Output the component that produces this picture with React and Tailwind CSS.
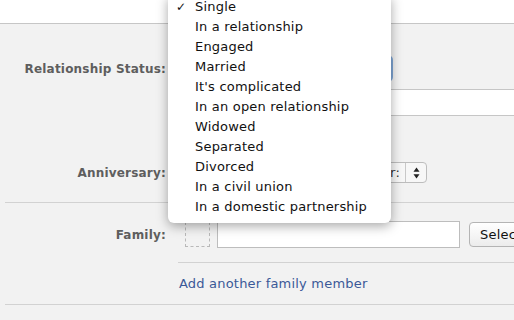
export default function App() {
  const items = [
    "Single",
    "In a relationship",
    "Engaged",
    "Married",
    "It's complicated",
    "In an open relationship",
    "Widowed",
    "Separated",
    "Divorced",
    "In a civil union",
    "In a domestic partnership",
  ];
  const label = "w-[166px] shrink-0 text-right font-bold text-[12px] tracking-[0.2px] text-[#5e5e5e]";
  return (
    <div className="relative w-[514px] h-[320px] overflow-hidden bg-[#f2f2f2] font-['DejaVu_Sans',sans-serif] text-[13px] tracking-[0.2px]">
      <div className="h-[24px] bg-white border-b border-[#c6c6c6]" />

      <div className="mt-[31px] flex items-center h-[27px]">
        <div className={label}>Relationship Status:</div>
        <div className="ml-[12px] shrink-0 w-[215px] h-[27px] rounded-[5px] border-2 border-[#7fa6d6] bg-white" />
      </div>

      <div className="mt-[7px] ml-[178px] w-[360px] h-[27px] bg-white border-y border-[#c6c6c6]" />

      <div className="mt-[46px] flex items-center h-[21px]">
        <div className={label}>Anniversary:</div>
        <div className="ml-[174px] shrink-0 flex items-center h-[21px] w-[87px] rounded-[4px] border border-[#bdbdbd] bg-[#f7f7f7]">
          <span className="flex-1 text-right pr-[5px] text-[#333]">Year:</span>
          <span className="flex items-center justify-center w-[21px] h-full border-l border-[#c8c8c8]">
            <svg width="7" height="12" viewBox="0 0 7 12">
              <path d="M3.5 0.5 L6.5 4.8 L0.5 4.8 Z" fill="#222" />
              <path d="M3.5 11.5 L6.5 7.2 L0.5 7.2 Z" fill="#222" />
            </svg>
          </span>
        </div>
      </div>

      <div className="mt-[19px] ml-[5px] border-t border-[#d2d2d2]" />

      <div className="mt-[18px] flex items-center h-[27px]">
        <div className={label}>Family:</div>
        <div className="ml-[19px] shrink-0 w-[25px] h-[25px] border border-dashed border-[#b9b9b9]" />
        <div className="ml-[7px] shrink-0 w-[243px] h-[27px] bg-white border border-[#bdbdbd]" />
        <div className="ml-[9px] shrink-0 h-[25px] flex items-center px-[10px] rounded-[4px] border border-[#b4b4b4] bg-gradient-to-b from-white to-[#ececec] text-[#111] w-[60px]">
          Select
        </div>
      </div>

      <div className="mt-[14px] ml-[178px] border-t border-[#d2d2d2]" />

      <div className="mt-[11px] ml-[179px] leading-[20px] text-[#3b5998]">Add another family member</div>

      <div className="mt-[10px] ml-[5px] border-t border-[#d2d2d2]" />

      <div className="absolute left-[168px] top-[-4px] w-[223px] pt-[1px] pb-[6px] bg-white rounded-b-[6px] shadow-[0_3px_12px_rgba(0,0,0,0.35)]">
        {items.map((t, i) => (
          <div key={t} className="relative h-[20px] leading-[20px] pl-[27px] text-[#111]">
            {i === 0 && <span className="absolute left-[8px] top-0 text-[12px]">✓</span>}
            {t}
          </div>
        ))}
      </div>
    </div>
  );
}
